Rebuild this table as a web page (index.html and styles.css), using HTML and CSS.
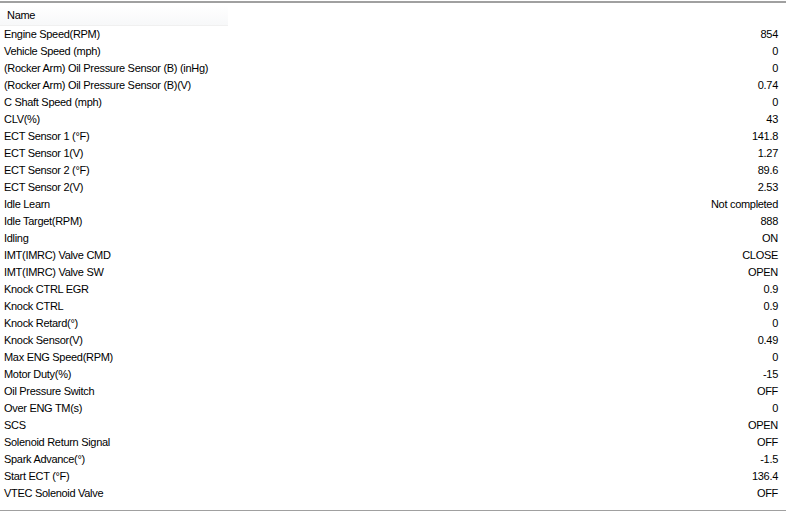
FILE: index.html
```html
<!DOCTYPE html>
<html lang="en">
<head>
    <meta charset="UTF-8">
    <title>Data List</title>
    <link rel="stylesheet" href="styles.css">
</head>
<body>
    <div class="list-view">
        <div class="header">
            <div class="header-cell">Name</div>
        </div>
        <ul class="rows">
            <li class="row"><span class="name">Engine Speed(RPM)</span><span class="value">854</span></li>
            <li class="row"><span class="name">Vehicle Speed (mph)</span><span class="value">0</span></li>
            <li class="row"><span class="name">(Rocker Arm) Oil Pressure Sensor (B) (inHg)</span><span class="value">0</span></li>
            <li class="row"><span class="name">(Rocker Arm) Oil Pressure Sensor (B)(V)</span><span class="value">0.74</span></li>
            <li class="row"><span class="name">C Shaft Speed (mph)</span><span class="value">0</span></li>
            <li class="row"><span class="name">CLV(%)</span><span class="value">43</span></li>
            <li class="row"><span class="name">ECT Sensor 1 (°F)</span><span class="value">141.8</span></li>
            <li class="row"><span class="name">ECT Sensor 1(V)</span><span class="value">1.27</span></li>
            <li class="row"><span class="name">ECT Sensor 2 (°F)</span><span class="value">89.6</span></li>
            <li class="row"><span class="name">ECT Sensor 2(V)</span><span class="value">2.53</span></li>
            <li class="row"><span class="name">Idle Learn</span><span class="value">Not completed</span></li>
            <li class="row"><span class="name">Idle Target(RPM)</span><span class="value">888</span></li>
            <li class="row"><span class="name">Idling</span><span class="value">ON</span></li>
            <li class="row"><span class="name">IMT(IMRC) Valve CMD</span><span class="value">CLOSE</span></li>
            <li class="row"><span class="name">IMT(IMRC) Valve SW</span><span class="value">OPEN</span></li>
            <li class="row"><span class="name">Knock CTRL EGR</span><span class="value">0.9</span></li>
            <li class="row"><span class="name">Knock CTRL</span><span class="value">0.9</span></li>
            <li class="row"><span class="name">Knock Retard(°)</span><span class="value">0</span></li>
            <li class="row"><span class="name">Knock Sensor(V)</span><span class="value">0.49</span></li>
            <li class="row"><span class="name">Max ENG Speed(RPM)</span><span class="value">0</span></li>
            <li class="row"><span class="name">Motor Duty(%)</span><span class="value">-15</span></li>
            <li class="row"><span class="name">Oil Pressure Switch</span><span class="value">OFF</span></li>
            <li class="row"><span class="name">Over ENG TM(s)</span><span class="value">0</span></li>
            <li class="row"><span class="name">SCS</span><span class="value">OPEN</span></li>
            <li class="row"><span class="name">Solenoid Return Signal</span><span class="value">OFF</span></li>
            <li class="row"><span class="name">Spark Advance(°)</span><span class="value">-1.5</span></li>
            <li class="row"><span class="name">Start ECT (°F)</span><span class="value">136.4</span></li>
            <li class="row"><span class="name">VTEC Solenoid Valve</span><span class="value">OFF</span></li>
        </ul>
    </div>
</body>
</html>
```

FILE: styles.css
```css
* {
    margin: 0;
    padding: 0;
    box-sizing: border-box;
}

body {
    width: 786px;
    height: 512px;
    background: #ffffff;
    font-family: 'Liberation Sans', Arial, sans-serif;
    font-size: 11px;
    letter-spacing: -0.3px;
    color: #000000;
    padding-top: 1px;
}

.list-view {
    height: 510px;
    border-top: 2px solid #a0a0a0;
    border-bottom: 1px solid #a0a0a0;
    padding-top: 2px;
}

.header {
    display: flex;
    height: 21px;
}

.header-cell {
    width: 228px;
    padding-left: 7px;
    line-height: 21px;
    background: linear-gradient(to bottom, #ffffff, #f7f8f9);
    border-bottom: 1px solid #f0f0f0;
}

.rows {
    list-style: none;
}

.row {
    display: flex;
    justify-content: space-between;
    height: 17px;
    line-height: 17px;
    padding-left: 4px;
    padding-right: 8px;
}
```
